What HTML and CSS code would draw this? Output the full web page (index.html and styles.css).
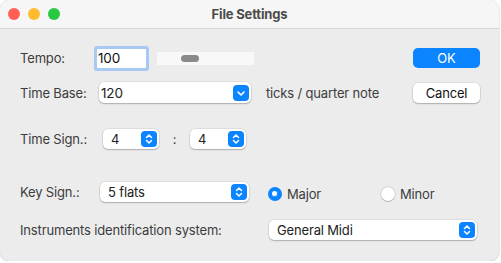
FILE: index.html
```html
<!DOCTYPE html>
<html lang="en">
<head>
  <meta charset="UTF-8" />
  <title>File Settings</title>
  <link rel="stylesheet" href="styles.css">
</head>
<body>
  <div class="window">
    <header class="titlebar">
      <div class="lights">
        <span class="light red"></span>
        <span class="light yellow"></span>
        <span class="light green"></span>
      </div>
      <h1 class="title">File Settings</h1>
    </header>

    <main class="content">
      <div class="row row-tempo">
        <span class="lbl lbl-tempo">Tempo:</span>
        <div class="field">100</div>
        <div class="slider"><span class="thumb"></span></div>
        <button class="btn btn-primary">OK</button>
      </div>

      <div class="row row-base">
        <span class="lbl lbl-base">Time Base:</span>
        <div class="select select-base">
          <span class="select-text">120</span>
          <span class="arrow">
            <svg width="16" height="16" viewBox="0 0 16 16" fill="none" stroke="#fff" stroke-width="1.6" stroke-linecap="round" stroke-linejoin="round"><path d="M5 7l3 3 3-3"/></svg>
          </span>
        </div>
        <span class="hint">ticks / quarter note</span>
        <button class="btn">Cancel</button>
      </div>

      <div class="row row-sign">
        <span class="lbl lbl-sign">Time Sign.:</span>
        <div class="select select-small">
          <span class="select-text">4</span>
          <span class="arrow">
            <svg width="16" height="16" viewBox="0 0 16 16" fill="none" stroke="#fff" stroke-width="1.5" stroke-linecap="round" stroke-linejoin="round"><path d="M5.5 6.5L8 4l2.5 2.5M5.5 9.5L8 12l2.5-2.5"/></svg>
          </span>
        </div>
        <span class="colon">:</span>
        <div class="select select-small">
          <span class="select-text">4</span>
          <span class="arrow">
            <svg width="16" height="16" viewBox="0 0 16 16" fill="none" stroke="#fff" stroke-width="1.5" stroke-linecap="round" stroke-linejoin="round"><path d="M5.5 6.5L8 4l2.5 2.5M5.5 9.5L8 12l2.5-2.5"/></svg>
          </span>
        </div>
      </div>

      <div class="row row-key">
        <span class="lbl lbl-key">Key Sign.:</span>
        <div class="select select-key">
          <span class="select-text">5 flats</span>
          <span class="arrow">
            <svg width="16" height="16" viewBox="0 0 16 16" fill="none" stroke="#fff" stroke-width="1.5" stroke-linecap="round" stroke-linejoin="round"><path d="M5.5 6.5L8 4l2.5 2.5M5.5 9.5L8 12l2.5-2.5"/></svg>
          </span>
        </div>
        <div class="radios">
          <label class="radio-item"><span class="radio on"></span>Major</label>
          <label class="radio-item"><span class="radio"></span>Minor</label>
        </div>
      </div>

      <div class="row row-inst">
        <span class="lbl lbl-inst">Instruments identification system:</span>
        <div class="select select-inst">
          <span class="select-text">General Midi</span>
          <span class="arrow">
            <svg width="16" height="16" viewBox="0 0 16 16" fill="none" stroke="#fff" stroke-width="1.5" stroke-linecap="round" stroke-linejoin="round"><path d="M5.5 6.5L8 4l2.5 2.5M5.5 9.5L8 12l2.5-2.5"/></svg>
          </span>
        </div>
      </div>
    </main>
  </div>
</body>
</html>
```

FILE: styles.css
```css
:root {
  --bg: #ececec;
  --bar: #f6f6f6;
  --fg: #3c3c3c;
  --accent: #0b84ff;
}
* { margin: 0; padding: 0; box-sizing: border-box; }
body {
  background: #fff;
  font-family: Inter, 'Liberation Sans', sans-serif;
  font-size: 13px;
  letter-spacing: -0.16px;
  color: var(--fg);
}
.window {
  width: 499px;
  height: 261px;
  background: var(--bg);
  border-radius: 10px;
  overflow: hidden;
  box-shadow: 0 0 0 1px rgba(0, 0, 0, 0.06), 0 1px 2px rgba(0, 0, 0, 0.12);
}
.titlebar {
  height: 29px;
  background: var(--bar);
  border-bottom: 1px solid #d6d6d6;
  display: flex;
  align-items: center;
  position: relative;
}
.lights {
  display: flex;
  gap: 8px;
  padding-left: 8px;
}
.light {
  width: 12px;
  height: 12px;
  border-radius: 50%;
}
.red { background: #ff5f57; }
.yellow { background: #febc2e; }
.green { background: #28c840; }
.title {
  position: absolute;
  left: 0;
  right: 0;
  text-align: center;
  font-size: 13px;
  font-weight: 700;
  color: #4b4b4b;
  pointer-events: none;
}
.content {
  padding: 0 19px 0 20px;
  display: flex;
  flex-direction: column;
}
.row {
  display: flex;
  align-items: center;
}
.row-tempo { height: 24px; margin-top: 17px; }
.row-base { height: 21px; margin-top: 12px; }
.row-sign { height: 20px; margin-top: 26px; }
.row-key { height: 20px; margin-top: 33px; }
.row-inst { height: 20px; margin-top: 18px; }
.lbl { flex: none; white-space: nowrap; }
.lbl-tempo { width: 77px; }
.lbl-base { width: 79px; }
.lbl-sign { width: 83px; }
.lbl-key { width: 80px; }
.lbl-inst { width: 249px; }
.field {
  width: 49px;
  height: 19px;
  background: #fff;
  color: #111;
  font-size: 13.5px;
  line-height: 19px;
  padding-left: 1px;
  box-shadow: 0 0 0 3px #a7c9f4;
  border-radius: 1px;
}
.slider {
  width: 97px;
  height: 13px;
  margin-left: 11px;
  background: #f8f8f8;
  display: flex;
  align-items: center;
  padding-left: 24px;
}
.thumb {
  width: 18px;
  height: 7px;
  border-radius: 4px;
  background: #8a8a8a;
}
.btn {
  margin-left: auto;
  width: 67px;
  height: 20px;
  border: none;
  border-radius: 5px;
  background: #fff;
  color: #111;
  font-family: inherit;
  font-size: 13px;
  letter-spacing: inherit;
  box-shadow: 0 0 0 0.5px rgba(0, 0, 0, 0.12), 0 1px 1.5px rgba(0, 0, 0, 0.22);
}
.btn-primary {
  background: var(--accent);
  color: #fff;
  box-shadow: none;
}
.select {
  flex: none;
  height: 20px;
  background: #fff;
  border-radius: 5px;
  box-shadow: 0 0 0 0.5px rgba(0, 0, 0, 0.12), 0 1px 1.5px rgba(0, 0, 0, 0.22);
  display: flex;
  align-items: center;
  justify-content: space-between;
  padding-right: 2px;
  color: #222;
}
.select-text { padding-left: 8px; }
.arrow {
  width: 16px;
  height: 16px;
  border-radius: 4px;
  background: var(--accent);
  display: flex;
}
.select-base { width: 152px; height: 21px; }
.select-base .select-text { padding-left: 2px; font-size: 13.5px; }
.hint { margin-left: 15px; }
.select-small { width: 56px; }
.colon { width: 31px; text-align: center; }
.select-key { width: 149px; }
.radios {
  display: flex;
  margin-left: 19px;
  padding-top: 3px;
}
.radio-item {
  width: 113px;
  display: flex;
  align-items: center;
  gap: 5px;
}
.radio {
  width: 14px;
  height: 14px;
  border-radius: 50%;
  background: #fff;
  box-shadow: 0 0 0 0.5px rgba(0, 0, 0, 0.2), 0 1px 1px rgba(0, 0, 0, 0.15);
}
.radio.on {
  background: var(--accent);
  border: 4.5px solid var(--accent);
  box-shadow: none;
  background-clip: padding-box;
}
.radio.on::after {
  content: '';
  display: block;
  width: 5px;
  height: 5px;
  border-radius: 50%;
  background: #fff;
}
.select-inst { width: 208px; }
```
